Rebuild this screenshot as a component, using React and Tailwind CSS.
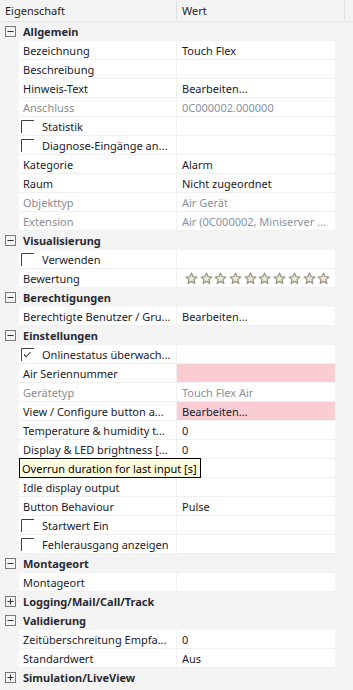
import React from "react";

const rows = [
  { type: "cat", label: "Allgemein", open: true },
  { label: "Bezeichnung", value: "Touch Flex" },
  { label: "Beschreibung", value: "" },
  { label: "Hinweis-Text", value: "Bearbeiten..." },
  { label: "Anschluss", value: "0C000002.000000", disabled: true },
  { label: "Statistik", check: false },
  { label: "Diagnose-Eingänge an...", check: false },
  { label: "Kategorie", value: "Alarm" },
  { label: "Raum", value: "Nicht zugeordnet" },
  { label: "Objekttyp", value: "Air Gerät", disabled: true },
  { label: "Extension", value: "Air (0C000002, Miniserver ...", disabled: true },
  { type: "cat", label: "Visualisierung", open: true },
  { label: "Verwenden", check: false },
  { label: "Bewertung", stars: true },
  { type: "cat", label: "Berechtigungen", open: true },
  { label: "Berechtigte Benutzer / Gru...", value: "Bearbeiten..." },
  { type: "cat", label: "Einstellungen", open: true },
  { label: "Onlinestatus überwach...", check: true },
  { label: "Air Seriennummer", value: "", pink: true },
  { label: "Gerätetyp", value: "Touch Flex Air", disabled: true },
  { label: "View / Configure button a...", value: "Bearbeiten...", pink: true },
  { label: "Temperature & humidity t...", value: "0" },
  { label: "Display & LED brightness [...", value: "0" },
  { label: "", value: "", tooltip: "Overrun duration for last input [s]" },
  { label: "Idle display output", value: "" },
  { label: "Button Behaviour", value: "Pulse" },
  { label: "Startwert Ein", check: false },
  { label: "Fehlerausgang anzeigen", check: false },
  { type: "cat", label: "Montageort", open: true },
  { label: "Montageort", value: "" },
  { type: "cat", label: "Logging/Mail/Call/Track", open: false },
  { type: "cat", label: "Validierung", open: true },
  { label: "Zeitüberschreitung Empfa...", value: "0" },
  { label: "Standardwert", value: "Aus" },
  { type: "cat", label: "Simulation/LiveView", open: false },
];

const Expander = ({ open }) => (
  <svg width="11" height="11" viewBox="0 0 11 11" className="shrink-0">
    <rect x="0.5" y="0.5" width="10" height="10" fill="none" stroke="#7a7a7a" />
    <line x1="2.5" y1="5.5" x2="8.5" y2="5.5" stroke="#333" />
    {!open && <line x1="5.5" y1="2.5" x2="5.5" y2="8.5" stroke="#333" />}
  </svg>
);

const Checkbox = ({ checked }) => (
  <svg width="13" height="13" viewBox="0 0 13 13" className="shrink-0">
    <path d="M0.5 13 V0.5 H13" fill="none" stroke="#404040" />
    {checked && <path d="M3 6.5 L5.2 8.8 L9.5 4" fill="none" stroke="#333" strokeWidth="1.1" />}
  </svg>
);

const Star = () => (
  <svg width="13" height="13" viewBox="0 0 24 24" className="shrink-0">
    <path
      d="M12 2 L14.9 8.6 L22 9.3 L16.6 14 L18.2 21 L12 17.3 L5.8 21 L7.4 14 L2 9.3 L9.1 8.6 Z"
      fill="#ece9e1"
      stroke="#9c9480"
      strokeWidth="2.2"
      strokeLinejoin="round"
    />
  </svg>
);

const Row = ({ row }) => {
  if (row.type === "cat") {
    return (
      <div className="flex h-[19px] items-center bg-[#f4f4f4]">
        <div className="flex w-[19px] justify-center pl-[1px]">
          <Expander open={row.open} />
        </div>
        <span className="pl-[4px] font-bold text-[#2a2a35]">{row.label}</span>
      </div>
    );
  }
  const labelColor = row.disabled ? "text-[#8c8c8c]" : "text-[#1a1a2a]";
  const valueColor = row.disabled ? "text-[#8891a0]" : "text-[#1a1a2a]";
  return (
    <div className="flex h-[19px] bg-[#f4f4f4]">
      <div className="w-[19px] shrink-0" />
      <div className="relative flex w-[158px] shrink-0 items-center border-r border-b border-[#f0f0f0] bg-white">
        {row.check !== undefined ? (
          <div className="flex items-center pl-[2px]">
            <Checkbox checked={row.check} />
            <span className={`truncate pl-[8px] ${labelColor}`}>{row.label}</span>
          </div>
        ) : (
          <span className={`truncate pl-[4px] pr-[4px] ${labelColor}`}>{row.label}</span>
        )}
        {row.tooltip && (
          <div className="absolute left-0 top-[-1px] z-10 flex h-[20px] items-center border border-black bg-[#ffffe1] pl-[2px] pr-[3px] text-black whitespace-nowrap">
            {row.tooltip}
          </div>
        )}
      </div>
      <div
        className={`flex w-[158px] shrink-0 items-center border-b ${
          row.pink ? "border-[#f4f4f4] bg-[#f9cdd3]" : "border-[#f0f0f0] bg-white"
        }`}
      >
        {row.stars ? (
          <div className="flex gap-[1.7px] pl-[8px]">
            {Array.from({ length: 10 }).map((_, i) => (
              <Star key={i} />
            ))}
          </div>
        ) : (
          <span className={`truncate pl-[5px] ${valueColor}`}>{row.value}</span>
        )}
      </div>
    </div>
  );
};

export default function App() {
  return (
    <div
      className="h-[690px] w-[353px] overflow-hidden bg-[#f4f4f4] text-[11px] leading-[19px]"
      style={{ fontFamily: '"Segoe UI", "Noto Sans", "Open Sans", sans-serif' }}
    >
      <div className="flex h-[22px] items-center border-b border-[#e3e3e3] bg-[#f4f4f4] text-[#1e1e1e]">
        <div className="w-[177px] shrink-0 border-r border-[#e0e0e0] pl-[5px]">Eigenschaft</div>
        <div className="w-[168px] shrink-0 border-r border-[#e0e0e0] pl-[5px]">Wert</div>
      </div>
      {rows.map((row, i) => (
        <Row key={i} row={row} />
      ))}
    </div>
  );
}
